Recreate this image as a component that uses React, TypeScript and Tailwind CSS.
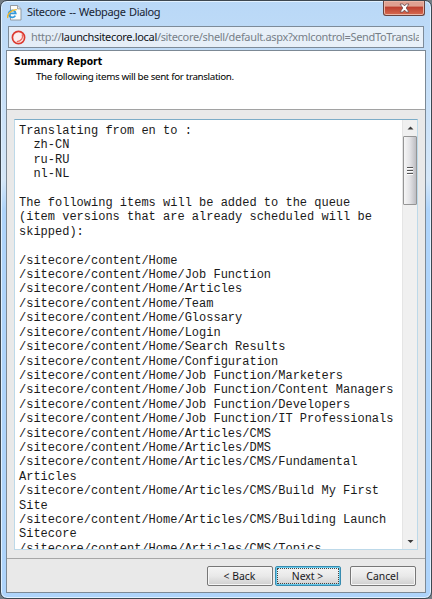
import React from "react";

const report = `Translating from en to :
  zh-CN
  ru-RU
  nl-NL

The following items will be added to the queue
(item versions that are already scheduled will be
skipped):

/sitecore/content/Home
/sitecore/content/Home/Job Function
/sitecore/content/Home/Articles
/sitecore/content/Home/Team
/sitecore/content/Home/Glossary
/sitecore/content/Home/Login
/sitecore/content/Home/Search Results
/sitecore/content/Home/Configuration
/sitecore/content/Home/Job Function/Marketers
/sitecore/content/Home/Job Function/Content Managers
/sitecore/content/Home/Job Function/Developers
/sitecore/content/Home/Job Function/IT Professionals
/sitecore/content/Home/Articles/CMS
/sitecore/content/Home/Articles/DMS
/sitecore/content/Home/Articles/CMS/Fundamental
Articles
/sitecore/content/Home/Articles/CMS/Build My First
Site
/sitecore/content/Home/Articles/CMS/Building Launch
Sitecore
/sitecore/content/Home/Articles/CMS/Topics`;

function PageIcon() {
  return (
    <svg width="15" height="16" viewBox="0 0 15 16" className="shrink-0">
      <path d="M3.5.5h7l3.5 3.2v11.3H3.5z" fill="#fcfcfa" stroke="#8b9299" strokeWidth=".9" />
      <path d="M10.5.5v3.4H14" fill="#dde2e7" stroke="#8b9299" strokeWidth=".8" />
      <path d="M8.3 10.6A3.5 3.5 0 1 1 8.7 8.4H2.2" fill="none" stroke="#3299dc" strokeWidth="1.8" />
      <path d="M.8 13C-.3 10 4.2 4.2 9.8 4.6" fill="none" stroke="#edb732" strokeWidth="1.4" />
    </svg>
  );
}

function SitecoreIcon() {
  return (
    <svg width="15" height="15" viewBox="0 0 15 15" className="shrink-0">
      <circle cx="7.5" cy="7.5" r="6.1" fill="#fbeeee" stroke="#dc3a30" strokeWidth="1.7" />
      <path d="M11.2 4.200c1.300 3.700-.9 6.800-5.400 7.500" fill="none" stroke="#ea6a60" strokeWidth="1.3" />
    </svg>
  );
}

function DialogButton({ label, focused = false, className = "" }: { label: string; focused?: boolean; className?: string }) {
  return (
    <button
      className={
        "h-[20px] w-[66px] rounded-[2px] border bg-linear-to-b from-[#f4f4f4] via-[#e9e9e9] to-[#cfcfcf] p-px font-['Noto_Sans',sans-serif] text-[10.4px] leading-[15px] text-[#17171b] " +
        (focused ? "border-[#398cb0] shadow-[inset_0_0_0_1px_#67cbed] " : "border-[#777] shadow-[inset_0_0_0_1px_#f6f6f6] ") +
        className
      }
    >
      <span className={"flex h-full items-center justify-center border pr-px " + (focused ? "border-dotted border-[#444]" : "border-transparent")}>{label}</span>
    </button>
  );
}

export default function App() {
  return (
    <div className="h-[599px] w-[432px] overflow-hidden bg-[#747d84]">
      <div className="flex h-[599px] flex-col rounded-[7px] border border-[#3d4750] bg-linear-to-b from-[#b9d8f7] from-0% via-[#d5e7f8] via-30% to-[#aed4fb] to-35% px-[5px] pb-[5px] shadow-[inset_0_0_0_1px_#e1f1ff]">
        <div className="flex h-[25px] shrink-0 items-start">
          <div className="flex h-[25px] items-center gap-[5px] pb-[2px] pl-px">
            <PageIcon />
            <span className="whitespace-nowrap font-['Noto_Sans',sans-serif] text-[11px] tracking-[-0.35px] [word-spacing:1px] text-[#182331]">Sitecore -- Webpage Dialog</span>
          </div>
          <div className="ml-auto mr-[1px] flex h-[15px] w-[42px] items-center justify-center rounded-b-[3px] border border-t-0 border-[#68433f] bg-linear-to-b from-[#dfa091] from-35% via-[#bd4030] via-45% to-[#d76a50] shadow-[inset_0_0_0_1px_#eab5a6]">
            <svg width="11" height="10" viewBox="0 0 11 10">
              <path d="M1 1h3l1.5 2L7 1h3L7.2 5 10 9H7L5.5 7 4 9H1l2.8-4z" fill="#fff" stroke="#6b4b51" strokeWidth=".8" />
            </svg>
          </div>
        </div>
        <div className="mx-[2px] flex h-[22px] shrink-0 items-center border border-[#7d8b99] bg-linear-to-r from-[#e4edf7] to-[#e9f1f9] pl-[2px] pr-[4px]">
          <SitecoreIcon />
          <div className="ml-[5px] min-w-0 overflow-hidden whitespace-nowrap font-['Noto_Sans',sans-serif] text-[11px] leading-[18px] tracking-[-0.33px] text-[#777f88]">
            http://<span className="text-[#101318]">launchsitecore.local</span>/sitecore/shell/default.aspx?xmlcontrol=SendToTranslation
          </div>
        </div>
        <div className="mt-[2px] flex min-h-0 flex-1 flex-col border border-[#7c8995] bg-[#e9e9e9]">
          <div className="h-[59px] shrink-0 border-b border-[#a2a2a2] bg-white pl-[7px] pt-[3px] text-black">
            <div className="font-['DejaVu_Sans_Condensed','DejaVu_Sans',sans-serif] text-[10.3px] font-bold leading-[15px]">Summary Report</div>
            <div className="whitespace-nowrap pl-[22px] font-['Noto_Sans',sans-serif] text-[9.8px] leading-[15px] tracking-[-0.35px]">The following items will be sent for translation.</div>
          </div>
          <div className="ml-[7px] mr-[7px] mt-[9px] flex h-[431px] shrink-0 border border-[#bdd9e9] border-t-[#7cacc7] bg-white">
            <pre className="h-full min-w-0 flex-1 overflow-hidden pl-[4px] pt-[4px] font-['Liberation_Mono',monospace] text-[12px] leading-[14.4px] text-[#1a1a1a]">{report}</pre>
            <div className="flex w-[15px] shrink-0 flex-col items-center border-l border-[#e5e5e5] bg-[#f0f0f0]">
              <svg width="7" height="16" viewBox="0 0 7 16"><path d="M0.5 9.5 3.5 6.5 6.5 9.5z" fill="#3b3b3b" /></svg>
              <div className="flex h-[69px] w-[14px] flex-col items-center justify-center gap-px rounded-[1px] border border-[#959595] bg-linear-to-r from-[#f6f6f6] via-[#e2e2e5] to-[#bdbdc2]">
                <span className="h-[2px] w-[6px] border-t border-[#555] bg-white" />
                <span className="h-[2px] w-[6px] border-t border-[#555] bg-white" />
                <span className="h-[2px] w-[6px] border-t border-[#555] bg-white" />
              </div>
              <svg width="7" height="16" viewBox="0 0 7 16" className="mt-auto"><path d="M0.5 7h6L3.5 10z" fill="#3b3b3b" /></svg>
            </div>
          </div>
          <div className="mt-[8px] flex flex-1 items-start border-t border-[#a7a7a7] pl-[200px] pt-[7px]">
            <DialogButton label="< Back" />
            <DialogButton label="Next >" focused className="ml-[2px]" />
            <DialogButton label="Cancel" className="ml-[9px]" />
          </div>
        </div>
      </div>
    </div>
  );
}
